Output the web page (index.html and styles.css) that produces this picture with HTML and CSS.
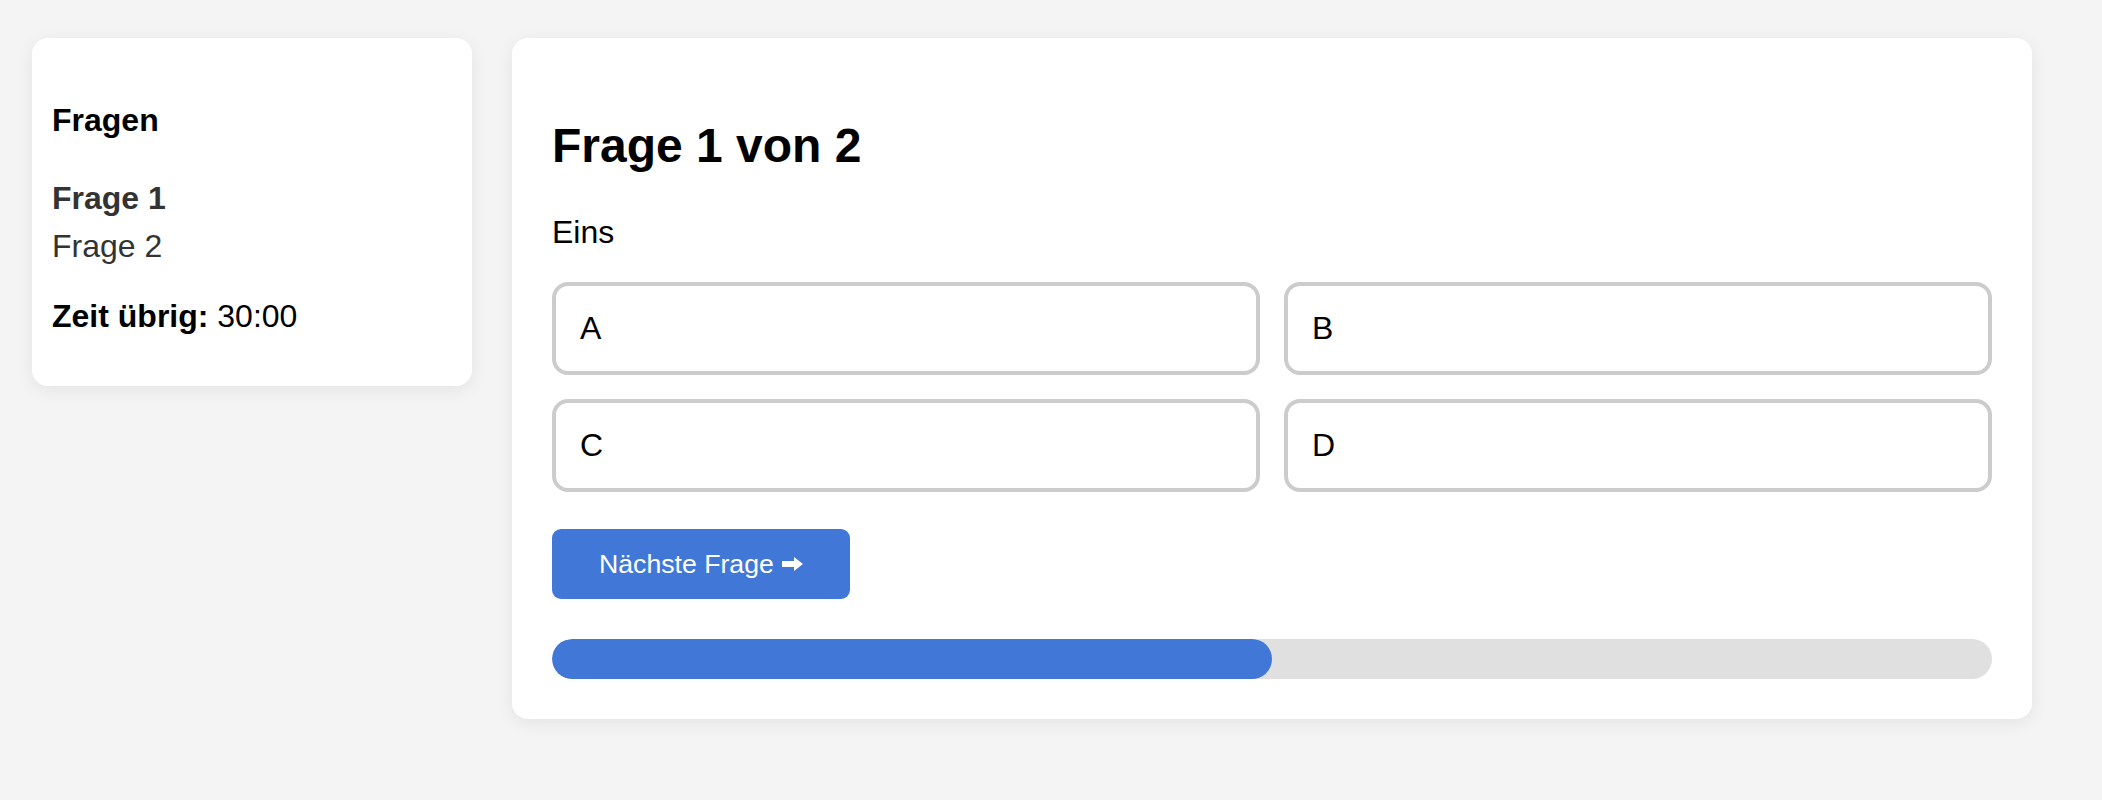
FILE: index.html
```html
<!DOCTYPE html>
<html lang="de">
<head>
  <meta charset="UTF-8">
  <meta name="viewport" content="width=device-width, initial-scale=1.0">
  <title>Quiz</title>

  <link rel="stylesheet" href="styles.css">
</head>
<body>

  <div class="layout">
    <aside class="card sidebar">
      <h3 class="side-title">Fragen</h3>
      <ul class="question-list">
        <li class="current">Frage 1</li>
        <li>Frage 2</li>
      </ul>
      <p class="timer"><strong>Zeit übrig:</strong> <span id="time">30:00</span></p>
    </aside>

    <main class="card quiz">
      <h2 class="quiz-title">Frage 1 von 2</h2>
      <p class="question-text">Eins</p>
      <div class="options">
        <button class="option">A</button>
        <button class="option">B</button>
        <button class="option">C</button>
        <button class="option">D</button>
      </div>
      <button class="next-btn">Nächste Frage
        <svg class="arrow" width="21" height="14" viewBox="0 0 21 14"><path d="M0 4 H12 V0 L21 7 L12 14 V10 H0 Z" fill="#fff"/></svg>
      </button>
      <div class="progress">
        <div class="progress-fill" style="width: 50%"></div>
      </div>
    </main>
  </div>

</body>
</html>
```

FILE: styles.css
```css
*{
  box-sizing: border-box;
}
body{
  margin: 0;
  background: #f4f4f4;
  font-family: "Liberation Sans", Arial, sans-serif;
  font-size: 32px;
  color: #000;
}
.layout{
  display: flex;
  align-items: flex-start;
  gap: 40px;
  max-width: 2000px;
  padding: 38px 32px;
  box-sizing: content-box;
}
.card{
  background: #fff;
  border-radius: 16px;
  box-shadow: 0 4px 18px rgba(0, 0, 0, 0.07);
}

/* sidebar */
.sidebar{
  width: 440px;
  flex-shrink: 0;
  padding: 20px 20px 20px;
}
.side-title{
  font-size: 32px;
  line-height: 36px;
  margin: 44px 0 42px;
}
.question-list{
  list-style: none;
  margin: 0;
  padding: 0;
  color: #333;
}
.question-list li{
  line-height: 36px;
}
.question-list li + li{
  margin-top: 12px;
}
.question-list .current{
  font-weight: bold;
}
.timer{
  line-height: 36px;
  margin: 34px 0 32px;
}

/* quiz */
.quiz{
  flex: 1;
  padding: 40px;
}
.quiz-title{
  font-size: 48px;
  line-height: 56px;
  margin: 40px 0 40px;
}
.question-text{
  line-height: 36px;
  margin: 0 0 32px;
}
.options{
  display: grid;
  grid-template-columns: 1fr 1fr;
  gap: 24px;
  margin-bottom: 37px;
}
.option{
  font-family: inherit;
  font-size: 32px;
  line-height: 1.15;
  text-align: left;
  color: #000;
  background: #fff;
  border: 4px solid #ccc;
  border-radius: 16px;
  padding: 24px;
  cursor: pointer;
}
.next-btn{
  display: inline-flex;
  align-items: center;
  gap: 8px;
  font-family: inherit;
  font-size: 26.67px;
  line-height: 1.15;
  color: #fff;
  background: #4178d8;
  border: none;
  border-radius: 9px;
  padding: 20px 47px;
  cursor: pointer;
}
.arrow{
  display: block;
}
.progress{
  margin-top: 40px;
  height: 40px;
  background: #e0e0e0;
  border-radius: 20px;
  overflow: hidden;
}
.progress-fill{
  height: 100%;
  background: #4178d8;
  border-radius: 20px;
}
```
